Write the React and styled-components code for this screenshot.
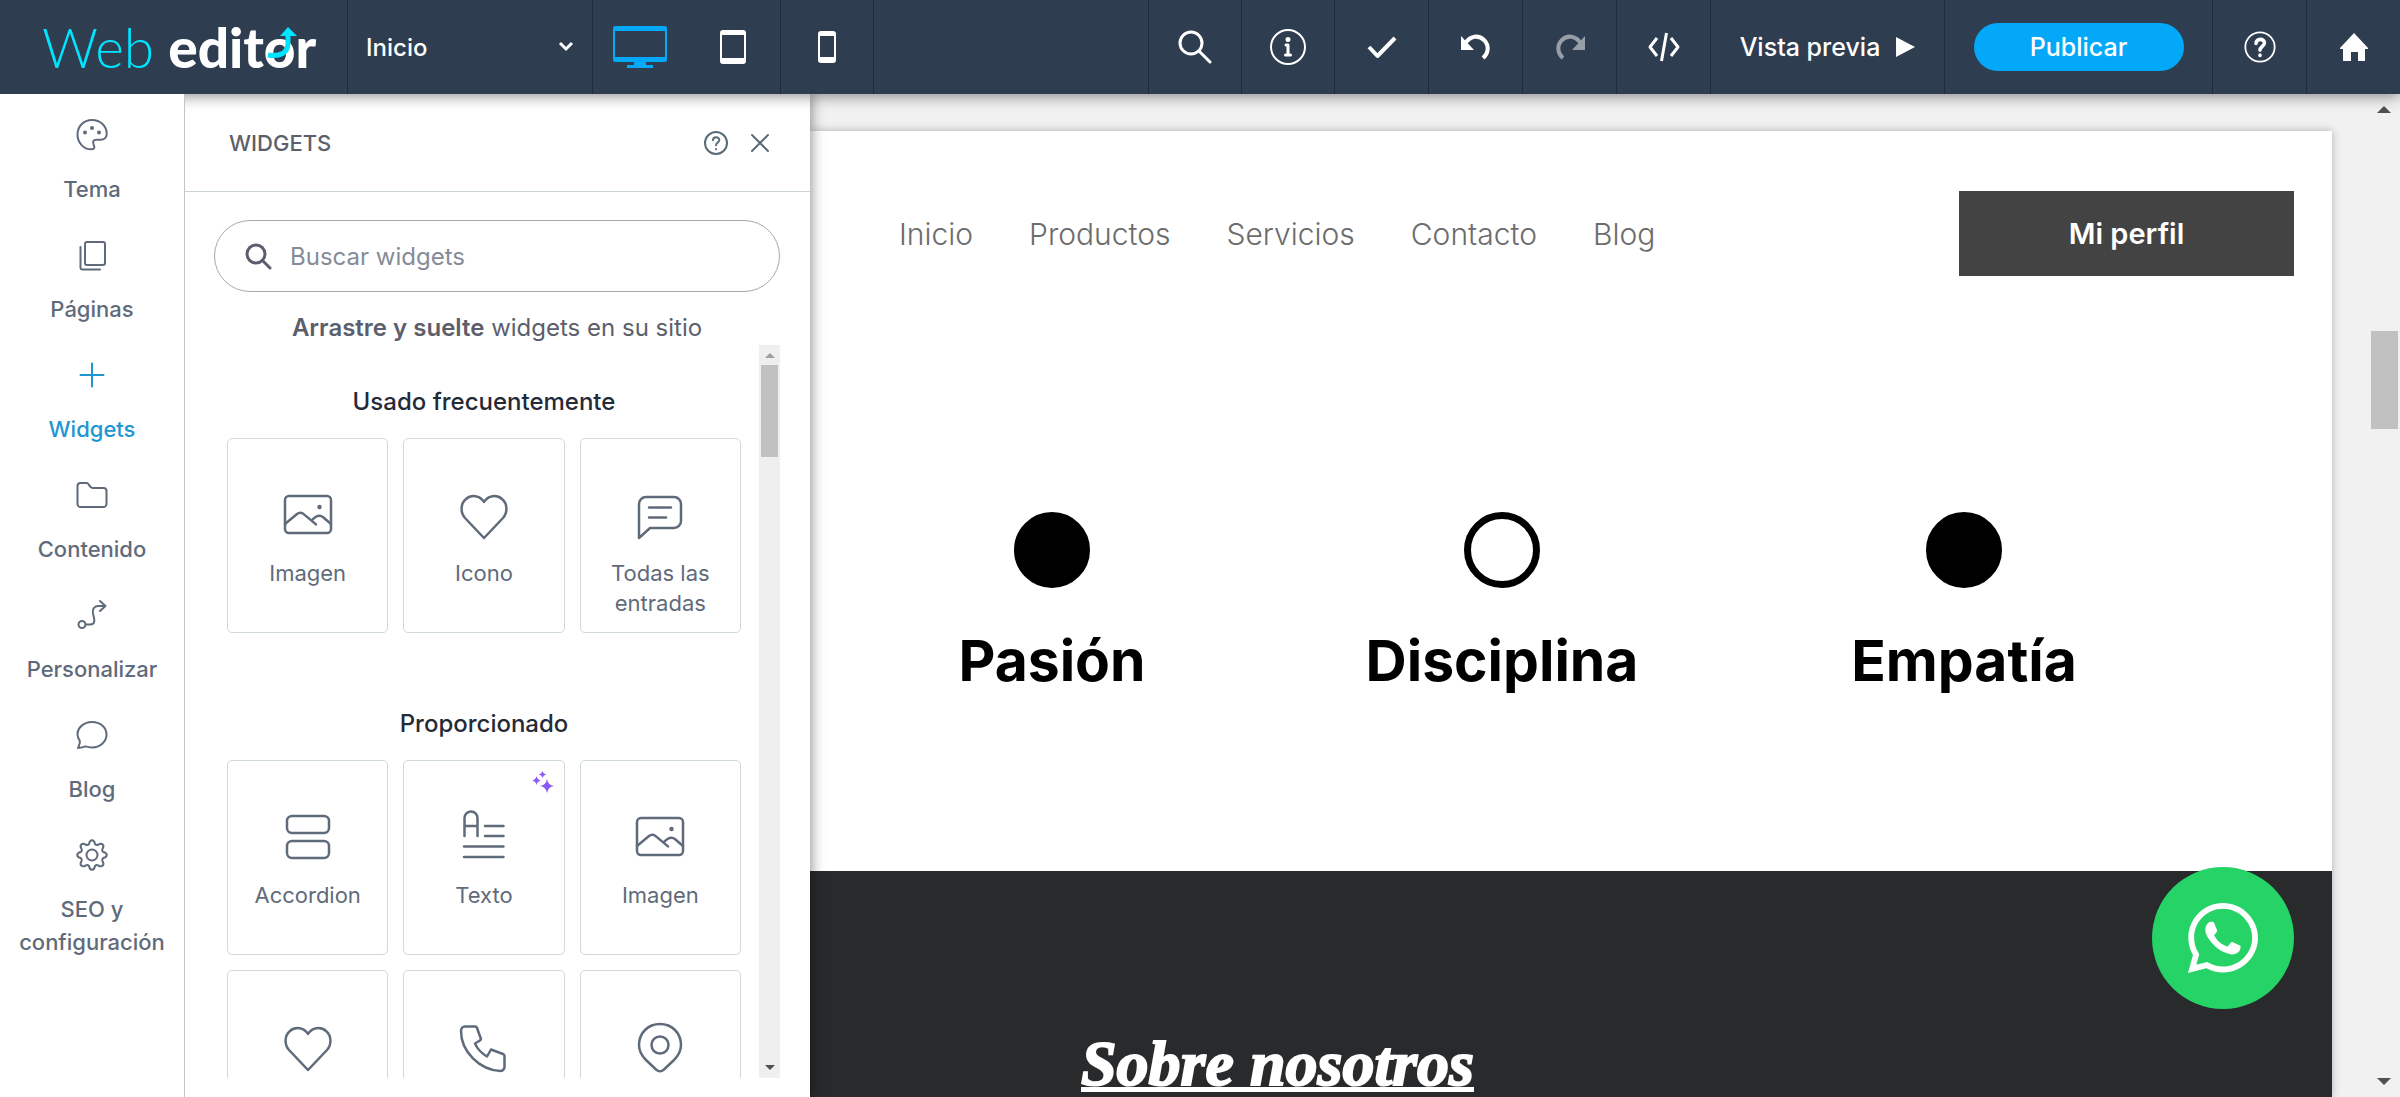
import React from "react";
import styled, { createGlobalStyle, css } from "styled-components";
import { FaWhatsapp } from "react-icons/fa";

const slate = "#5f6b7a";
const navy = "#2e3d50";
const divider = "#1f2b3a";

const GlobalStyle = createGlobalStyle`
  * { box-sizing: border-box; }
  body { margin: 0; overflow: hidden; }
  button, input, select { font: inherit; color: inherit; }
  button { border: 0; background: none; padding: 0; cursor: pointer; }
  svg { display: block; flex: none; }
`;

const Shell = styled.div`
  display: flex;
  flex-direction: column;
  height: 100vh;
  background: #f1f1f1;
  font-family: Inter, "Liberation Sans", sans-serif;
  font-size: 22px;
`;

/* ---------- Top bar ---------- */
const TopBar = styled.header`
  position: relative;
  z-index: 3;
  display: flex;
  flex: none;
  height: 94px;
  background: ${navy};
  color: #fff;
  box-shadow: 0 2px 14px rgba(0, 0, 0, 0.45);
`;

const Brand = styled.a`
  position: relative;
  display: flex;
  align-items: center;
  gap: 14px;
  width: 347px;
  padding-left: 42px;
  font-family: Lato, sans-serif;
  font-size: 55px;
  line-height: 94px;
  color: #fff;
  text-decoration: none;
`;

const BrandThin = styled.span`
  font-weight: 300;
  color: #00e5ff;
`;

const BrandBold = styled.span`
  font-weight: 900;
`;

const BrandArrow = styled.svg`
  position: absolute;
  left: 264px;
  top: 26px;
`;

const PagePicker = styled.label`
  position: relative;
  display: flex;
  align-items: center;
  width: 245px;
  border-left: 1px solid ${divider};
  font-size: 24px;
  font-weight: 500;
`;

const PageSelect = styled.select`
  appearance: none;
  width: 100%;
  height: 100%;
  padding: 0 18px;
  border: 0;
  background: transparent;
`;

const PickerChevron = styled.svg`
  position: absolute;
  right: 18px;
  pointer-events: none;
`;

const BarButton = styled.button`
  display: flex;
  align-items: center;
  justify-content: center;
  gap: 16px;
  width: ${(p) => p.$width || 94}px;
  border-left: ${(p) => (p.$plain ? 0 : 1)}px solid ${divider};
  font-size: 25px;
  font-weight: 500;
  svg { opacity: ${(p) => (p.$dim ? 0.5 : 1)}; }
`;

const Spacer = styled.div`
  flex: 1;
  border-left: 1px solid ${divider};
`;

const PublishCell = styled.div`
  display: flex;
  align-items: center;
  justify-content: center;
  width: 268px;
  border-left: 1px solid ${divider};
`;

const PublishButton = styled.button`
  width: 210px;
  height: 48px;
  border-radius: 24px;
  background: #03a9f8;
  font-size: 25px;
  font-weight: 500;
`;

/* ---------- Side navigation ---------- */
const Body = styled.div`
  display: flex;
  flex: 1;
  min-height: 0;
`;

const SideNav = styled.nav`
  position: relative;
  z-index: 3;
  display: flex;
  flex-direction: column;
  gap: 33px;
  flex: none;
  width: 185px;
  padding-top: 25px;
  border-right: 1px solid #c4c4c4;
  background: #fff;
`;

const SideItem = styled.button`
  display: flex;
  flex-direction: column;
  align-items: center;
  gap: 22px;
  line-height: 33px;
  font-weight: 500;
  color: ${(p) => (p.$active ? "#1e96d1" : slate)};
`;

/* ---------- Widgets panel ---------- */
const Panel = styled.aside`
  position: relative;
  z-index: 2;
  display: flex;
  flex-direction: column;
  flex: none;
  width: 625px;
  background: #fff;
  color: #5c5f6b;
  box-shadow: 2px 0 12px rgba(0, 0, 0, 0.4);
`;

const PanelHeader = styled.div`
  display: flex;
  align-items: center;
  gap: 22px;
  flex: none;
  height: 98px;
  padding: 0 40px 0 44px;
  border-bottom: 1px solid #c9d3d8;
  color: #5a6c76;
`;

const PanelTitle = styled.h2`
  flex: 1;
  margin: 0;
  font-size: 22px;
  font-weight: 500;
  color: #5c5f6b;
`;

const PanelBody = styled.div`
  display: flex;
  flex-direction: column;
  flex: 1;
  min-height: 0;
  padding: 28px 30px 19px 29px;
`;

const SearchBox = styled.label`
  display: flex;
  align-items: center;
  gap: 18px;
  flex: none;
  height: 72px;
  padding: 0 30px;
  border: 1px solid #a8a9ad;
  border-radius: 36px;
`;

const SearchInput = styled.input`
  flex: 1;
  min-width: 0;
  padding: 0;
  border: 0;
  outline: 0;
  background: transparent;
  font-size: 24px;
  &::placeholder { color: #868b99; opacity: 1; }
`;

const Hint = styled.p`
  flex: none;
  margin: 21px 0 2px;
  text-align: center;
  font-size: 24px;
  line-height: 30px;
`;

const Strong = styled.strong`
  font-weight: 600;
`;

const ScrollArea = styled.div`
  display: flex;
  flex: 1;
  min-height: 0;
`;

const ScrollContent = styled.div`
  flex: 1;
  min-width: 0;
  overflow: hidden;
  padding: 0 18px 0 13px;
`;

const ScrollTrack = styled.div`
  display: flex;
  flex-direction: column;
  align-items: center;
  justify-content: space-between;
  flex: none;
  width: ${(p) => (p.$wide ? 32 : 21)}px;
  padding: ${(p) => (p.$wide ? "12px 0" : "8px 0")};
  background: ${(p) => (p.$wide ? "#f1f1f1" : "#efefef")};
`;

const TrackLane = styled.div`
  flex: 1;
  width: 100%;
  padding: ${(p) => (p.$wide ? "218px 2px 0 3px" : "7px 2px 0")};
`;

const Thumb = styled.div`
  height: ${(p) => (p.$wide ? 98 : 92)}px;
  background: #c1c1c1;
`;

const Section = styled.section`
  padding-top: 42px;
  padding-bottom: 34px;
`;

const SectionTitle = styled.h3`
  margin: 0 0 21px;
  text-align: center;
  font-size: 24px;
  font-weight: 500;
  line-height: 30px;
  color: #252a37;
`;

const CardGrid = styled.div`
  display: grid;
  grid-template-columns: repeat(3, 1fr);
  gap: 15px;
`;

const Card = styled.button`
  position: relative;
  display: flex;
  flex-direction: column;
  align-items: center;
  gap: 10px;
  height: 195px;
  padding: 45px 14px 0;
  border: 1px solid #d0d9dc;
  border-radius: 5px;
  line-height: 30px;
  color: ${slate};
`;

const Sparkle = styled.svg`
  position: absolute;
  top: 10px;
  right: 10px;
`;

/* ---------- Site canvas ---------- */
const Canvas = styled.main`
  display: flex;
  flex: 1;
  min-width: 0;
  padding-top: 37px;
`;

const Site = styled.div`
  position: relative;
  display: flex;
  flex-direction: column;
  flex: 1;
  min-width: 0;
  margin-right: 36px;
  background: #fff;
  box-shadow: 0 0 8px rgba(0, 0, 0, 0.28);
  overflow: hidden;
`;

const SiteFrame = styled.div`
  display: flex;
  flex: 1;
  min-width: 0;
`;

const SiteHeader = styled.div`
  display: flex;
  align-items: center;
  justify-content: space-between;
  padding: 60px 38px 0 89px;
`;

const SiteNav = styled.nav`
  display: flex;
  gap: 56px;
`;

const SiteLink = styled.a`
  font-size: 30px;
  font-weight: 300;
  color: #6c6c6c;
  text-decoration: none;
`;

const ProfileButton = styled.button`
  width: 335px;
  height: 85px;
  background: #434343;
  color: #fff;
  font-size: 29px;
  font-weight: 600;
`;

const Values = styled.div`
  display: grid;
  grid-template-columns: 444fr 456fr 468fr;
  padding: 236px 134px 175px 20px;
`;

const Value = styled.div`
  display: flex;
  flex-direction: column;
  align-items: center;
  gap: 38px;
`;

const Dot = styled.div`
  width: 76px;
  height: 76px;
  border: 7px solid #000;
  border-radius: 50%;
  ${(p) => !p.$hollow && css`background: #000;`}
`;

const ValueTitle = styled.h2`
  margin: 0;
  font-size: 57px;
  font-weight: 700;
  line-height: 70px;
  color: #000;
`;

const About = styled.section`
  flex: 1;
  padding: 154px 0 0 271px;
  background: #292a2c;
  color: #fff;
`;

const AboutTitle = styled.h2`
  margin: 0;
  font-family: "Liberation Serif", serif;
  font-size: 64px;
  font-style: italic;
  font-weight: 700;
  line-height: 78px;
  text-decoration: underline;
  text-decoration-thickness: 5px;
  text-underline-offset: 2px;
  text-decoration-skip-ink: none;
  -webkit-text-stroke: 2px #fff;
`;

const ChatBubble = styled.a`
  position: absolute;
  right: 38px;
  bottom: 88px;
  display: flex;
  align-items: center;
  justify-content: center;
  width: 142px;
  height: 142px;
  border-radius: 50%;
  background: #25d366;
  color: #fff;
  font-size: 80px;
`;

/* ---------- Icons ---------- */
const Icon = ({ size = 36, box = size, width = 2, children, ...rest }) => (
  <svg
    width={size}
    height={size}
    viewBox={`0 0 ${box} ${box}`}
    fill="none"
    stroke="currentColor"
    strokeWidth={width}
    strokeLinecap="round"
    strokeLinejoin="round"
    aria-hidden="true"
    {...rest}
  >
    {children}
  </svg>
);

const Arrow = ({ down, size = 14, color = "#505050" }) => (
  <svg width={size} height={size / 2} viewBox="0 0 14 7" aria-hidden="true">
    <path d={down ? "M0 0h14L7 7z" : "M0 7h14L7 0z"} fill={color} />
  </svg>
);

const sideIcons = {
  palette: (
    <>
      <path d="M16 1C7.500 1 1.500 7.500 1.500 15.500c0 8.500 6.500 14.800 13.500 14.800 3.500 0 3.800-1.800 3-3.600-1.400-3-1.600-6 2.500-6h4c4 0 6.200-2.600 6.200-6C30.700 7 24.500 1 16 1z" />
      <g fill="currentColor" stroke="none">
        <circle cx="9" cy="13.500" r="2" /><circle cx="16" cy="9" r="2" /><circle cx="23" cy="13.500" r="2" />
      </g>
    </>
  ),
  pages: (
    <>
      <rect x="9" y="3" width="20" height="23" rx="2" />
      <path d="M4.500 8v20.500a2 2 0 0 0 2 2H24" />
    </>
  ),
  plus: <path d="M16 4.500v23M4.500 16h23" />,
  folder: <path d="M1.500 7a3 3 0 0 1 3-3h6.500c2 0 2.500 5 5.500 5h11a3 3 0 0 1 3 3v13a3 3 0 0 1-3 3h-23a3 3 0 0 1-3-3z" />,
  route: (
    <>
      <circle cx="6" cy="25.500" r="3.500" />
      <path d="M9.500 25.500H14c6.500 0 4-7 3-11-.800-4 1-7.500 5-7.500h7M24 2l5.500 5L24 12" />
    </>
  ),
  chat: <path d="M16 3C8 3 1.500 8.500 1.500 15.500c0 2.600 1 4.600 2.300 6.300C4.500 24 3 26.500 2 29c2.500-.200 5-.500 7.500-1.600 2 .700 4.200 1.100 6.500 1.100 8 0 14.500-5.700 14.500-13S24 3 16 3z" />,
  gear: (
    <>
      <circle cx="16" cy="16" r="5.500" />
      <path d="M13 5c1-5 5-5 6 0 1 1.200 2 1.300 3 .800 4-2.600 7 .400 4.400 4.200-.500 1.200-.300 2 .800 3 4.700 1 4.700 5 0 6-1.100 1-1.300 1.800-.800 3 2.600 3.900-.400 6.900-4.400 4.300-1-.500-2-.400-3 .700-1 5-5 5-6 0-1-1.100-2-1.200-3-.700-4 2.600-7-.400-4.400-4.300.500-1.200.300-2-.800-3-4.700-1-4.700-5 0-6 1.100-1 1.300-1.800.800-3C3 6.200 6 3.200 10 5.800c1 .500 2 .400 3-.800z" />
    </>
  ),
};

const cardIcons = {
  image: (
    <>
      <rect x="9" y="12" width="46" height="37" rx="4" />
      <path d="M9 40l12-10c2.600-2 5-1.500 7 .400l12 10M36 36c4-4.500 8-5.500 11.500-2.500L55 40" />
      <circle cx="43.500" cy="23" r="1" fill="currentColor" />
    </>
  ),
  heart: <path d="M32 18c-4-7-13-7.500-18-3-6 5-5.500 14-1 19l19 20 19-20c4.500-5 5-14-1-19-5-4.500-14-4-18 3z" />,
  chat: (
    <>
      <path d="M11 54V20a7 7 0 0 1 7-7h28a7 7 0 0 1 7 7v17a7 7 0 0 1-7 7H22z" />
      <path d="M21 23.500h22M21 33.500h17" />
    </>
  ),
  accordion: (
    <>
      <rect x="11" y="10" width="42" height="17" rx="5" />
      <rect x="11" y="35" width="42" height="17" rx="5" />
    </>
  ),
  text: (
    <>
      <path d="M12.500 30V12a6.500 6.500 0 0 1 13 0v18M12.500 20h13" />
      <path d="M33 20h18.500M33 30h18.500M12 40.500h39.500M12 51h39.500" />
    </>
  ),
  phone: <path d="M13 10.500h10a2 2 0 0 1 2 1.500l4 11c0 1.500-4 3-6 4.500 2 5 7.500 10.500 12 13l4-7L51 38a2 2 0 0 1 1.500 2v11c0 2-2 4-4 4C27 54 9 35 9 15c0-2.500 1.500-4.500 4-4.500z" />,
  pin: (
    <>
      <path d="M32 8c-12 0-21 9-21 21 0 7 3 11 7 15l10 9.500c3 2.500 5 2.500 8 0L46 44c4-4 7-8 7-15C53 17 44 8 32 8z" />
      <circle cx="32" cy="29" r="8.500" />
    </>
  ),
};

const QuestionGlyph = ({ size, mark = 2, ...rest }) => (
  <Icon size={size} box={36} {...rest}>
    <circle cx="18" cy="18" r="16.500" />
    <path d="M13.500 14c0-6 9.500-6 9.500-.500 0 3.500-5 4-5 8M18 27v.500" strokeWidth={mark} />
  </Icon>
);

const sideItems = [
  ["palette", "Tema"],
  ["pages", "Páginas"],
  ["plus", "Widgets"],
  ["folder", "Contenido"],
  ["route", "Personalizar"],
  ["chat", "Blog"],
  ["gear", "SEO y configuración"],
];

const sections = [
  {
    title: "Usado frecuentemente",
    cards: [
      { icon: "image", label: "Imagen" },
      { icon: "heart", label: "Icono" },
      { icon: "chat", label: "Todas las entradas" },
    ],
  },
  {
    title: "Proporcionado",
    cards: [
      { icon: "accordion", label: "Accordion" },
      { icon: "text", label: "Texto", ai: true },
      { icon: "image", label: "Imagen" },
      { icon: "heart" },
      { icon: "phone" },
      { icon: "pin" },
    ],
  },
];

const Header = () => (
  <TopBar>
    <Brand href="#" aria-label="Web editor">
      <BrandThin>Web</BrandThin>
      <BrandBold>editor</BrandBold>
      <BrandArrow width="38" height="36" viewBox="0 0 38 36" aria-hidden="true">
        <path d="M4 29c12 2 20-2 20-12V9" fill="none" stroke="#00e5ff" strokeWidth="5" />
        <path d="M16 10l8-9 9 9z" fill="#00e5ff" />
      </BrandArrow>
    </Brand>
    <PagePicker>
      <PageSelect aria-label="Página" defaultValue="Inicio">
        <option>Inicio</option>
      </PageSelect>
      <PickerChevron width="16" height="12" viewBox="0 0 16 12" fill="none" stroke="#fff" strokeWidth="3">
        <path d="M2 2l6 6 6-6" />
      </PickerChevron>
    </PagePicker>
    <BarButton aria-label="Escritorio">
      <svg width="54" height="42" viewBox="0 0 54 42" fill="#03a9f8">
        <path fillRule="evenodd" d="M2 0h50a2 2 0 0 1 2 2v32a2 2 0 0 1-2 2H33v3h7v3H14v-3h7v-3H2a2 2 0 0 1-2-2V2a2 2 0 0 1 2-2zm0 5v26h50V5z" />
      </svg>
    </BarButton>
    <BarButton $plain aria-label="Tableta">
      <svg width="26" height="34" viewBox="0 0 26 34" fill="#fff">
        <path fillRule="evenodd" d="M3 0h20a3 3 0 0 1 3 3v28a3 3 0 0 1-3 3H3a3 3 0 0 1-3-3V3a3 3 0 0 1 3-3zM2 5v23h22V5z" />
      </svg>
    </BarButton>
    <BarButton $width={93} aria-label="Móvil">
      <svg width="18" height="32" viewBox="0 0 18 32" fill="#fff">
        <path fillRule="evenodd" d="M3 0h12a3 3 0 0 1 3 3v26a3 3 0 0 1-3 3H3a3 3 0 0 1-3-3V3a3 3 0 0 1 3-3zM2 5v21h14V5z" />
      </svg>
    </BarButton>
    <Spacer />
    <BarButton $width={93} aria-label="Buscar">
      <Icon size={34} width={3}><circle cx="13" cy="13" r="11" /><path d="M21 21l11 11" /></Icon>
    </BarButton>
    <BarButton $width={93} aria-label="Información">
      <Icon size={36}>
        <circle cx="18" cy="18" r="17" />
        <circle cx="18" cy="10.500" r="1.500" fill="currentColor" />
        <path d="M16 16h2v10M15.500 26h5" strokeWidth="3" />
      </Icon>
    </BarButton>
    <BarButton aria-label="Guardado">
      <Icon size={32} width={4} strokeLinecap="butt"><path d="M3 16l8.500 9L29 7" /></Icon>
    </BarButton>
    <BarButton aria-label="Deshacer">
      <Icon size={32} width={4} strokeLinecap="butt" strokeLinejoin="miter">
        <path d="M5 13c5-9 14-9 19-4 6 6 4 14-1 18" />
        <path d="M1 5v14h13z" fill="currentColor" stroke="none" />
      </Icon>
    </BarButton>
    <BarButton $dim aria-label="Rehacer">
      <Icon size={32} width={4} strokeLinecap="butt" strokeLinejoin="miter">
        <path d="M27 13c-5-9-14-9-19-4-6 6-4 14 1 18" />
        <path d="M31 5v14H18z" fill="currentColor" stroke="none" />
      </Icon>
    </BarButton>
    <BarButton aria-label="Código">
      <Icon size={32} width={3} strokeLinecap="butt"><path d="M9 7l-7 9 7 9M23 7l7 9-7 9M18.500 2l-5 28" /></Icon>
    </BarButton>
    <BarButton $width={234}>
      Vista previa
      <svg width="19" height="20" viewBox="0 0 19 20" fill="#fff"><path d="M0 0l19 10L0 20z" /></svg>
    </BarButton>
    <PublishCell>
      <PublishButton>Publicar</PublishButton>
    </PublishCell>
    <BarButton aria-label="Ayuda"><QuestionGlyph size={32} mark={4} /></BarButton>
    <BarButton aria-label="Volver al inicio">
      <svg width="28" height="28" viewBox="0 0 28 28" fill="#fff">
        <path d="M14 0l14 15v1h-3v12h-7v-9h-7v9H3V16H0v-1z" />
      </svg>
    </BarButton>
  </TopBar>
);

const WidgetsPanel = () => (
  <Panel>
    <PanelHeader>
      <PanelTitle>WIDGETS</PanelTitle>
      <button aria-label="Ayuda de widgets"><QuestionGlyph size={24} width={3} mark={3} /></button>
      <button aria-label="Cerrar">
        <Icon size={20}><path d="M2 2l16 16M18 2L2 18" /></Icon>
      </button>
    </PanelHeader>
    <PanelBody>
      <SearchBox>
        <Icon size={27} width={3}><circle cx="11" cy="11" r="9" /><path d="M18 18l7 7" /></Icon>
        <SearchInput type="text" placeholder="Buscar widgets" aria-label="Buscar widgets" />
      </SearchBox>
      <Hint><Strong>Arrastre y suelte</Strong> widgets en su sitio</Hint>
      <ScrollArea>
        <ScrollContent>
          {sections.map((s) => (
            <Section key={s.title}>
              <SectionTitle>{s.title}</SectionTitle>
              <CardGrid>
                {s.cards.map(({ icon, label, ai }, i) => (
                  <Card key={i} aria-label={label ? undefined : icon}>
                    {ai && (
                      <Sparkle width="22" height="22" viewBox="0 0 22 22" fill="#8b5cf6" aria-hidden="true">
                        <path d="M15 8q1 6 7 7-6 1-7 7-1-6-7-7 6-1 7-7zM4.500 5q.800 3.700 4.500 4.500-3.700.800-4.500 4.500Q3.700 10.300 0 9.500 3.700 8.700 4.500 5zM10.500 0q.600 2.900 3.500 3.500-2.900.600-3.500 3.500Q9.900 4.100 7 3.500 9.900 2.900 10.500 0z" />
                      </Sparkle>
                    )}
                    <Icon size={64} width={2.5}>{cardIcons[icon]}</Icon>
                    {label}
                  </Card>
                ))}
              </CardGrid>
            </Section>
          ))}
        </ScrollContent>
        <ScrollTrack>
          <Arrow size={10} color="#9e9e9e" />
          <TrackLane><Thumb /></TrackLane>
          <Arrow size={10} down />
        </ScrollTrack>
      </ScrollArea>
    </PanelBody>
  </Panel>
);

const SitePreview = () => (
  <Site>
    <SiteHeader>
      <SiteNav>
        {["Inicio", "Productos", "Servicios", "Contacto", "Blog"].map((t) => (
          <SiteLink key={t} href="#">{t}</SiteLink>
        ))}
      </SiteNav>
      <ProfileButton>Mi perfil</ProfileButton>
    </SiteHeader>
    <Values>
      <Value><Dot /><ValueTitle>Pasión</ValueTitle></Value>
      <Value><Dot $hollow /><ValueTitle>Disciplina</ValueTitle></Value>
      <Value><Dot /><ValueTitle>Empatía</ValueTitle></Value>
    </Values>
    <About>
      <AboutTitle>Sobre nosotros</AboutTitle>
    </About>
    <ChatBubble href="#" aria-label="WhatsApp"><FaWhatsapp /></ChatBubble>
  </Site>
);

export default function App() {
  return (
    <>
      <GlobalStyle />
      <Shell>
        <Header />
        <Body>
          <SideNav>
            {sideItems.map(([icon, label]) => (
              <SideItem key={label} $active={label === "Widgets"}>
                <Icon size={32}>{sideIcons[icon]}</Icon>
                {label}
              </SideItem>
            ))}
          </SideNav>
          <WidgetsPanel />
          <SiteFrame>
            <Canvas><SitePreview /></Canvas>
            <ScrollTrack $wide>
              <Arrow />
              <TrackLane $wide><Thumb $wide /></TrackLane>
              <Arrow down />
            </ScrollTrack>
          </SiteFrame>
        </Body>
      </Shell>
    </>
  );
}
